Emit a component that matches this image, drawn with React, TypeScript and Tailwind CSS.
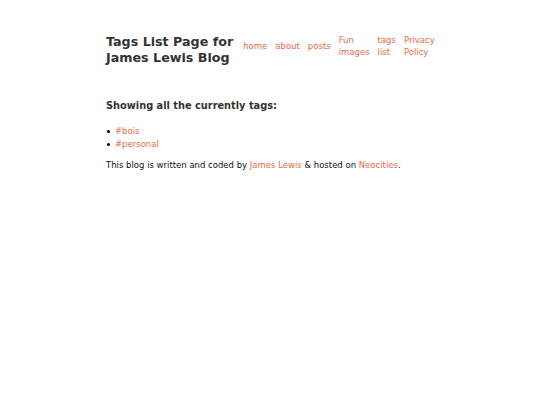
import React from 'react';

const links = ['home', 'about', 'posts', 'Fun images', 'tags list', 'Privacy Policy'];
const tags = ['#bois', '#personal'];

export default function App() {
  return (
    <div className="min-h-[405px] bg-white text-[8.5px] leading-[13px] text-[#111]" style={{ fontFamily: '"DejaVu Sans", Verdana, sans-serif' }}>
      <div className="mx-auto w-[328px] pt-[34px]">
        <header className="flex items-start gap-[10px]">
          <h1 className="shrink-0 text-[12.7px] font-bold leading-[16px] text-[#333]">
            Tags List Page for
            <br />
            James Lewis Blog
          </h1>
          <nav>
            <ul className="flex items-center gap-[8px] leading-[12px]">
              {links.map((l) => (
                <li key={l} className="w-min">
                  <a href="#" className="text-[#ec6b47]">{l}</a>
                </li>
              ))}
            </ul>
          </nav>
        </header>
        <main className="mt-[33px]">
          <h2 className="text-[9.8px] font-bold leading-[14px] text-[#333]">Showing all the currently tags:</h2>
          <ul className="mt-[12px]">
            {tags.map((t) => (
              <li key={t} className="flex items-center">
                <span className="ml-[1px] mr-[5px] h-[3px] w-[3px] rounded-full bg-black" />
                <a href="#" className="text-[#ec6b47]">{t}</a>
              </li>
            ))}
          </ul>
          <p className="mt-[8px]">
            This blog is written and coded by <a href="#" className="text-[#ec6b47]">James Lewis</a> &amp; hosted on{' '}
            <a href="#" className="text-[#ec6b47]">Neocities</a>.
          </p>
        </main>
      </div>
    </div>
  );
}
